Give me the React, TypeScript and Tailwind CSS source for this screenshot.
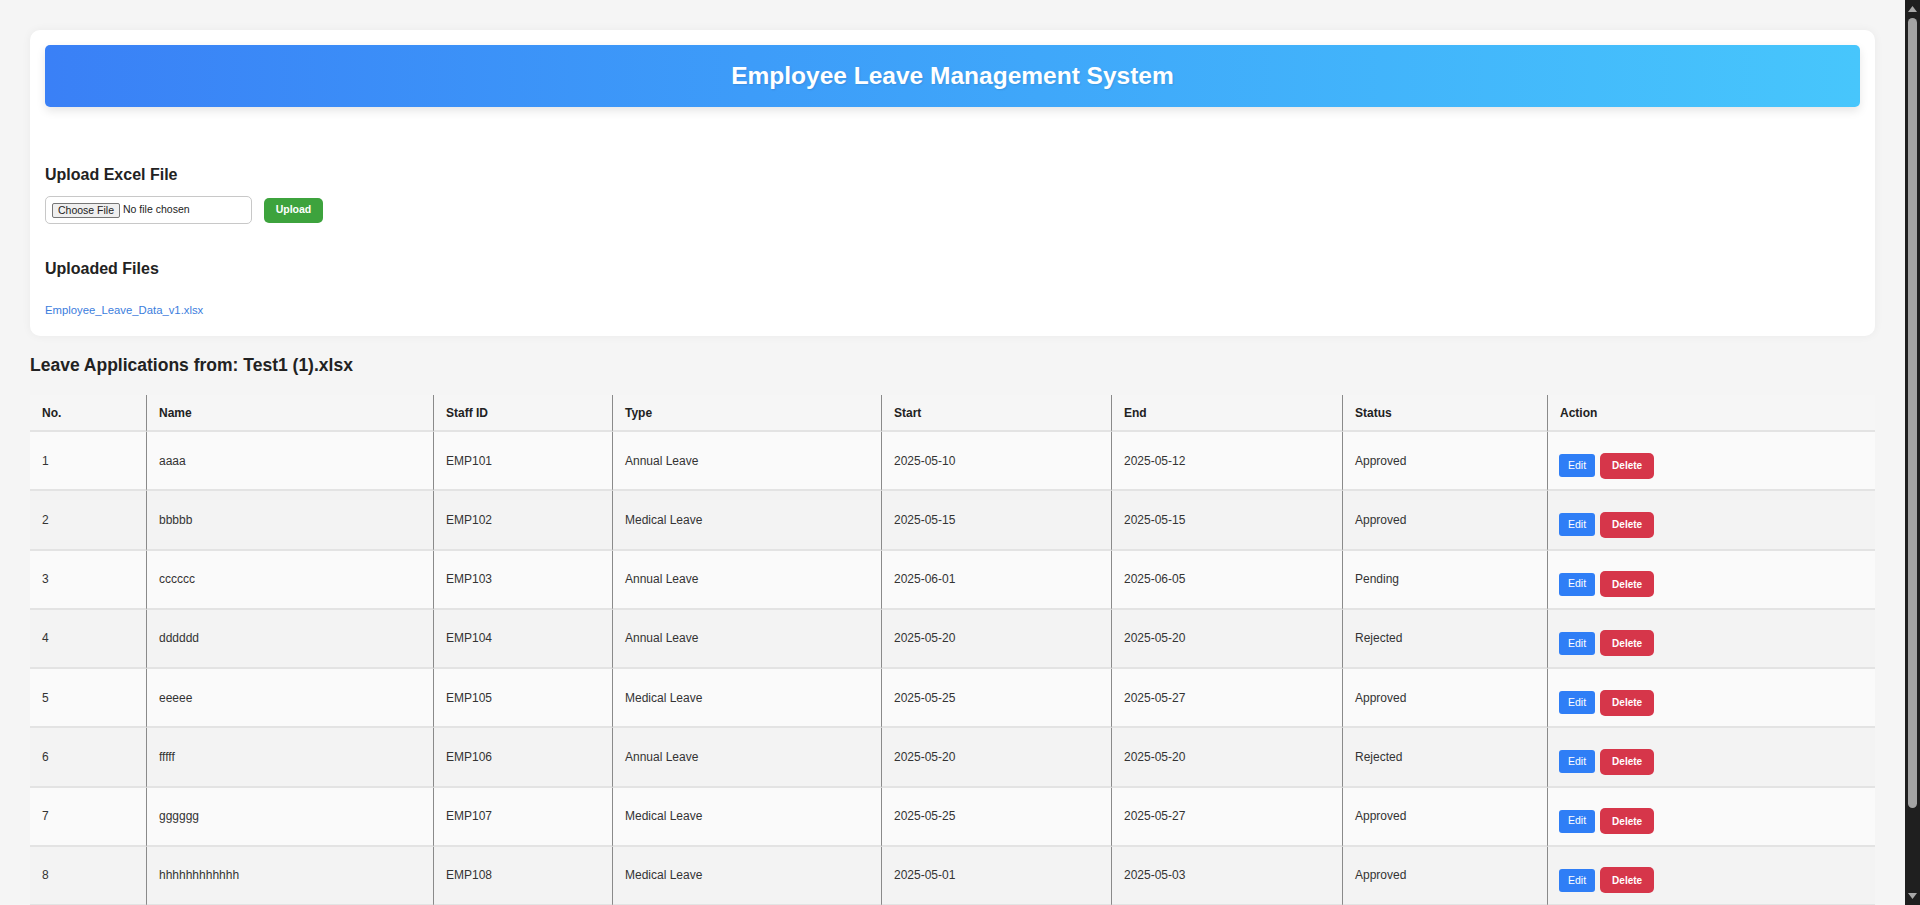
import React from "react";

const rows: string[][] = [
  ["1", "aaaa", "EMP101", "Annual Leave", "2025-05-10", "2025-05-12", "Approved"],
  ["2", "bbbbb", "EMP102", "Medical Leave", "2025-05-15", "2025-05-15", "Approved"],
  ["3", "cccccc", "EMP103", "Annual Leave", "2025-06-01", "2025-06-05", "Pending"],
  ["4", "dddddd", "EMP104", "Annual Leave", "2025-05-20", "2025-05-20", "Rejected"],
  ["5", "eeeee", "EMP105", "Medical Leave", "2025-05-25", "2025-05-27", "Approved"],
  ["6", "fffff", "EMP106", "Annual Leave", "2025-05-20", "2025-05-20", "Rejected"],
  ["7", "gggggg", "EMP107", "Medical Leave", "2025-05-25", "2025-05-27", "Approved"],
  ["8", "hhhhhhhhhhhh", "EMP108", "Medical Leave", "2025-05-01", "2025-05-03", "Approved"],
];

const headers = ["No.", "Name", "Staff ID", "Type", "Start", "End", "Status", "Action"];

function Scrollbar() {
  return (
    <div className="flex w-[15px] shrink-0 flex-col items-center bg-[#1f1f1f]">
      <div className="flex h-[18px] w-full items-center justify-center">
        <svg width="9" height="6" viewBox="0 0 9 6">
          <polygon points="4.5,0 9,6 0,6" fill="#a8a8a8" />
        </svg>
      </div>
      <div className="h-[790px] w-[9px] rounded-full bg-[#a3a3a3]" />
      <div className="flex-1" />
      <div className="flex h-[18px] w-full items-center justify-center">
        <svg width="9" height="6" viewBox="0 0 9 6">
          <polygon points="0,0 9,0 4.5,6" fill="#a8a8a8" />
        </svg>
      </div>
    </div>
  );
}

export default function App() {
  return (
    <div className="flex h-[905px] w-full overflow-hidden bg-[#f5f5f5] font-['Liberation_Sans',Arial,sans-serif] text-[#333]">
      <main className="min-w-0 flex-1 px-[30px] pt-[30px]">
        <section className="rounded-[10px] bg-white px-[15px] pt-[15px] pb-[18px] shadow-[0_0_10px_rgba(0,0,0,0.05)]">
          <header className="flex h-[62px] items-center justify-center rounded-[5px] bg-linear-to-r from-[#3a80f6] to-[#47c6fc] shadow-[0_4px_10px_rgba(0,0,0,0.1)]">
            <h1 className="text-[24.5px] font-bold leading-[30px] text-white [text-shadow:1px_1px_2px_rgba(0,0,0,0.1)]">
              Employee Leave Management System
            </h1>
          </header>

          <h3 className="mt-[57px] text-[16px] font-bold leading-[22px] text-[#222]">Upload Excel File</h3>
          <div className="mt-[10px] flex items-center gap-[12px]">
            <div className="flex h-[28px] w-[207px] items-center rounded-[5px] border border-[#c8c8c8] px-[6px] text-[10.5px] text-[#222]">
              <span className="rounded-[2px] border border-[#767676] bg-[#efefef] px-[5px] leading-[13px]">
                Choose File
              </span>
              <span className="ml-[3px]">No file chosen</span>
            </div>
            <button className="h-[25px] w-[59px] rounded-[5px] bg-[#3da33d] text-[10.5px] font-bold text-white">
              Upload
            </button>
          </div>

          <h3 className="mt-[34px] text-[16px] font-bold leading-[22px] text-[#222]">Uploaded Files</h3>
          <div className="mt-[22px] text-[11.3px] leading-[16px]">
            <a className="text-[#3b7ddd]" href="#">
              Employee_Leave_Data_v1.xlsx
            </a>
          </div>
        </section>

        <h2 className="mt-[17px] text-[17.5px] font-bold leading-[24px] text-[#222]">
          Leave Applications from: Test1 (1).xlsx
        </h2>

        <table className="mt-[18px] w-full table-fixed border-separate border-spacing-0 text-[12px]">
          <colgroup>
            <col className="w-[116px]" />
            <col className="w-[287px]" />
            <col className="w-[179px]" />
            <col className="w-[269px]" />
            <col className="w-[230px]" />
            <col className="w-[231px]" />
            <col className="w-[205px]" />
            <col />
          </colgroup>
          <thead>
            <tr>
              {headers.map((h, i) => (
                <th
                  key={h}
                  className={
                    i === 0
                      ? "h-[37px] border-b-2 border-b-[#e3e3e3] bg-[#f6f6f6] px-[12px] text-left font-bold text-[#222]"
                      : "h-[37px] border-b-2 border-l border-b-[#e3e3e3] border-l-[#8a8a8a] bg-[#f6f6f6] px-[12px] text-left font-bold text-[#222]"
                  }
                >
                  {h}
                </th>
              ))}
            </tr>
          </thead>
          <tbody>
            {rows.map((r, ri) => (
              <tr key={r[0]} className={ri % 2 === 0 ? "bg-[#fafafa]" : "bg-[#f3f3f3]"}>
                {r.map((c, ci) => (
                  <td
                    key={ci}
                    className={
                      ci === 0
                        ? "h-[59.25px] border-b-2 border-b-[#e3e3e3] px-[12px]"
                        : "h-[59.25px] border-b-2 border-l border-b-[#e3e3e3] border-l-[#8a8a8a] px-[12px]"
                    }
                  >
                    {c}
                  </td>
                ))}
                <td className="h-[59.25px] border-b-2 border-l border-b-[#e3e3e3] border-l-[#8a8a8a] pr-[12px] pl-[11px] pt-[10px]">
                  <div className="flex items-center gap-[5px]">
                    <button className="h-[23px] rounded-[3px] bg-[#2f7ef6] px-[9px] text-[10.5px] text-white">
                      Edit
                    </button>
                    <button className="h-[26px] rounded-[5px] bg-[#d6364a] px-[12px] text-[10px] font-bold text-white">
                      Delete
                    </button>
                  </div>
                </td>
              </tr>
            ))}
          </tbody>
        </table>
      </main>
      <Scrollbar />
    </div>
  );
}
